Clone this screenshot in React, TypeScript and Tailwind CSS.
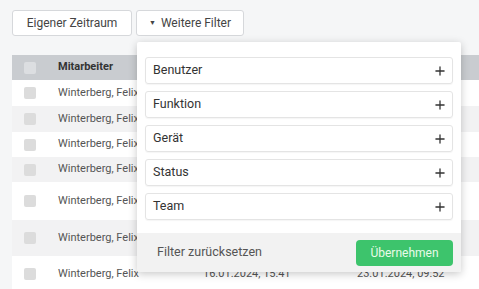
import { Plus } from 'lucide-react'

const rows = [
  { h: 'h-[26px]', bg: 'bg-white' },
  { h: 'h-[26px]', bg: 'bg-[#f2f2f3]' },
  { h: 'h-[25px]', bg: 'bg-white' },
  { h: 'h-[25px]', bg: 'bg-[#f2f2f3]' },
  { h: 'h-[38px]', bg: 'bg-white' },
  { h: 'h-[36px]', bg: 'bg-[#f2f2f3]' },
  { h: 'h-[36px]', bg: 'bg-white' },
]

const filters = ['Benutzer', 'Funktion', 'Gerät', 'Status', 'Team']

export default function App() {
  return (
    <div
      className="relative w-[479px] h-[289px] overflow-hidden bg-[#f5f6f7] text-[#444]"
      style={{ fontFamily: 'Roboto, "Noto Sans", sans-serif' }}
    >
      {/* Toolbar */}
      <div className="flex gap-[4px] pl-[12px] pt-[10px]">
        <button className="h-[26px] w-[120px] rounded-[3px] border border-[#d6d8db] bg-white text-[12px] text-[#444]">
          Eigener Zeitraum
        </button>
        <button className="flex h-[26px] w-[108px] items-center justify-center gap-[5px] rounded-[3px] border border-[#d6d8db] bg-white text-[12px] text-[#444]">
          <span className="text-[7px] leading-none">▼</span>
          Weitere Filter
        </button>
      </div>

      {/* Table */}
      <div className="ml-[12px] mt-[19px] w-[520px]">
        <div className="flex h-[25px] items-center bg-[#c9ccd0]">
          <div className="w-[46px] pl-[12px]">
            <div className="h-[12px] w-[12px] rounded-[2px] bg-[#dcdee1]" />
          </div>
          <div className="text-[11px] font-bold text-[#333]">Mitarbeiter</div>
        </div>
        {rows.map((r, i) => (
          <div key={i} className={`flex items-center ${r.h} ${r.bg}`}>
            <div className="w-[46px] pl-[12px]">
              <div className="h-[12px] w-[12px] rounded-[2px] bg-[#dcdcdc]" />
            </div>
            <div className="w-[145px] text-[11px] text-[#555]">Winterberg, Felix</div>
            <div className="w-[154px] text-[11px] text-[#555]">16.01.2024, 15:41</div>
            <div className="text-[11px] text-[#555]">23.01.2024, 09:52</div>
          </div>
        ))}
      </div>

      {/* Filter popup */}
      <div className="absolute left-[137px] top-[42px] w-[324px] overflow-hidden rounded-[2px] bg-white shadow-[0_2px_8px_rgba(0,0,0,0.22)]">
        <div className="flex flex-col gap-[7px] px-[8px] pt-[15px] pb-[13px]">
          {filters.map((f) => (
            <div
              key={f}
              className="flex h-[27px] items-center justify-between rounded-[3px] border border-[#e4e4e4] pl-[7px] pr-[5px] shadow-[0_1px_1px_rgba(0,0,0,0.04)]"
            >
              <span className="text-[12.5px] text-[#333]">{f}</span>
              <Plus size={14} strokeWidth={2.2} className="text-[#333]" />
            </div>
          ))}
        </div>
        <div className="flex h-[39px] items-center justify-between bg-[#f2f2f2] pl-[20px] pr-[8px]">
          <span className="text-[12.5px] text-[#555]">Filter zurücksetzen</span>
          <button className="h-[26px] w-[97px] rounded-[4px] bg-[#3dc46c] text-[12px] text-[#eafbe9]">
            Übernehmen
          </button>
        </div>
      </div>
    </div>
  )
}
